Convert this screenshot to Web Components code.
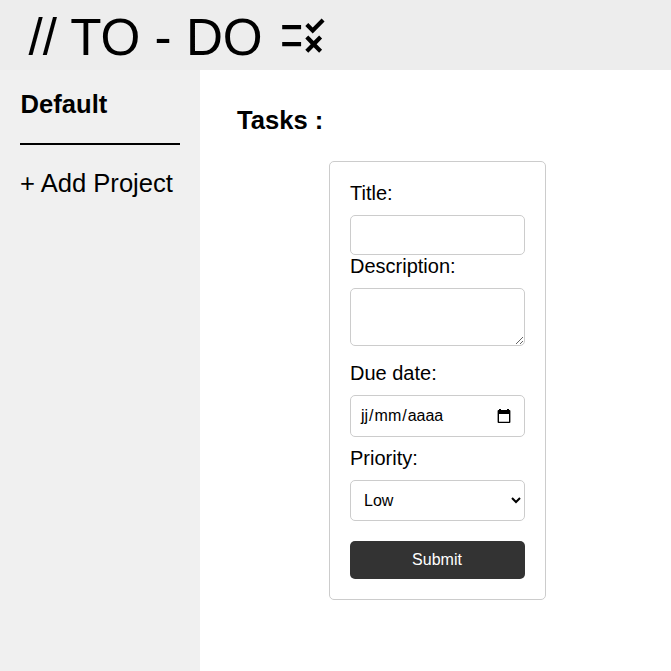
<!DOCTYPE html>
<html lang="en">
<head>
<meta charset="utf-8">
<title>To-Do</title>
<style>
html, body { margin: 0; height: 100%; }
body { font-family: "Liberation Sans", Arial, sans-serif; color: #000; background: #fff; overflow: hidden; }
</style>
</head>
<body>
<todo-app></todo-app>
<script>
const define = (name, html) => {
  const template = document.createElement('template');
  template.innerHTML = html;
  customElements.define(name, class extends HTMLElement {
    constructor() {
      super();
      this.attachShadow({ mode: 'open' }).append(template.content.cloneNode(true));
    }
  });
};

define('rule-icon', `
<style>:host{display:block;width:50.4px;height:51.2px}svg{display:block;width:100%;height:100%}</style>
<svg viewBox="0 0 24 24" preserveAspectRatio="none"><path d="M16.54 11 13 7.46l1.41-1.41 2.12 2.12 4.24-4.24 1.41 1.41L16.54 11zM11 7H2v2h9V7zm10 6.41L19.59 12 17 14.59 14.41 12 13 13.41 15.59 16 13 18.59 14.41 20 17 17.41 19.59 20 21 18.59 18.41 16 21 13.41zM11 15H2v2h9v-2z"/></svg>`);

define('app-header', `
<style>
:host{display:flex;height:70px;box-sizing:border-box;padding-left:28.5px;background:#ededed;align-items:center}
.title{font-size:51.2px;line-height:58px;white-space:pre;padding-top:6px;width:249px}
rule-icon{padding-top:1px}
</style>
<div class="title"><slot></slot></div><rule-icon></rule-icon>`);

define('project-sidebar', `
<style>
:host{display:block;box-sizing:border-box;width:200px;padding:20px;background:#f0f0f0;font-size:25.6px;line-height:29px}
.current{font-weight:bold;height:53px;border-bottom:2px solid #000;text-indent:.6px}
.add{padding-top:24px;white-space:nowrap}
</style>
<div class="current"><slot></slot></div><div class="add"><slot name="add"></slot></div>`);

define('form-field', `
<style>
:host{display:block}
.label{font-size:20px;line-height:23px;padding-bottom:10px;white-space:nowrap}
</style>
<div class="label"><slot name="label"></slot></div><slot></slot>`);

define('date-box', `
<style>
:host{display:flex;box-sizing:border-box;height:42px;padding:0 13px 0 9px;border:1px solid #ccc;border-radius:5px;align-items:center;justify-content:space-between;font-size:16px}
.parts{display:flex}
.parts span{padding:0 1px}.parts .sep{padding:0}
svg{display:block;width:14px;height:15px}
</style>
<div class="parts"><span class="day">jj</span><span class="sep">/</span><span>mm</span><span class="sep">/</span><span>aaaa</span></div>
<svg viewBox="0 0 14 15"><path fill-rule="evenodd" d="M2 0h2v1h6V0h2v1h.5q.9 0 .9.9v11.2q0 .9-.9.9h-11q-.9 0-.9-.9V1.9q0-.9.9-.9H2zM2 5v7.8h10V5z"/></svg>`);

define('task-form', `
<style>
:host{display:flex;flex-direction:column;box-sizing:border-box;width:217px;height:439px;padding:20px;border:1px solid #ccc;border-radius:5px}
input,textarea,select,button{display:block;box-sizing:border-box;width:100%;margin:0;font:16px "Liberation Sans",Arial,sans-serif;border:1px solid #ccc;border-radius:5px;background:#fff;color:#000;outline:none}
input{height:40px;padding:10px}
textarea{height:58px;padding:10px;resize:vertical}
select{height:41px;padding:10px 10px 10px 9px}
button{height:38px;margin-top:20px;border:0;padding:0 7px 0 6px;background:#333;color:#fff}
.due{margin-top:16px}.priority{margin-top:10px}
</style>
<form-field><span slot="label">Title:</span><input type="text"></form-field>
<form-field><span slot="label">Description:</span><textarea></textarea></form-field>
<form-field class="due"><span slot="label">Due date:</span><date-box></date-box></form-field>
<form-field class="priority"><span slot="label">Priority:</span><select><option>Low</option><option>Medium</option><option>High</option></select></form-field>
<button type="button">Submit</button>`);

define('task-panel', `
<style>
:host{display:block;box-sizing:border-box;padding:36px 37px 0}
h2{margin:0 0 26px;font-size:25.6px;line-height:29px}
task-form{margin:0 auto 0 92px}
</style>
<h2>Tasks :</h2><task-form></task-form>`);

define('todo-app', `
<style>
:host{display:grid;grid-template:70px 1fr / 200px 1fr;height:100vh}
app-header{grid-column:1 / -1}
</style>
<app-header>// TO - DO</app-header>
<project-sidebar>Default<span slot="add">+ Add Project</span></project-sidebar>
<task-panel></task-panel>`);
</script>
</body>
</html>
